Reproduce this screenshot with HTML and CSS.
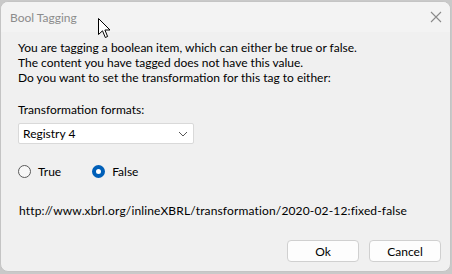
FILE: index.html
```html
<!DOCTYPE html>
<html lang="en">
<head>
    <meta charset="UTF-8"/>
    <title>Bool Tagging</title>
    <link rel="stylesheet" href="styles.css">
</head>
<body>
<div class="dialog">
    <div class="titlebar">
        <span class="title">Bool Tagging</span>
        <svg class="close" width="12" height="12" viewBox="0 0 12 12">
            <path d="M1 1L11 11M11 1L1 11" stroke="#8a8a8a" stroke-width="1.1"/>
        </svg>
    </div>
    <div class="content">
        <p class="message">
            You are tagging a boolean item, which can either be true or false.<br/>
            The content you have tagged does not have this value.<br/>
            Do you want to set the transformation for this tag to either:
        </p>
        <div class="field-label">Transformation formats:</div>
        <div class="select">
            <span>Registry 4</span>
            <svg width="10" height="6" viewBox="0 0 10 6">
                <path d="M1 1L5 5L9 1" fill="none" stroke="#555" stroke-width="1"/>
            </svg>
        </div>
        <div class="radios">
            <label class="radio"><span class="dot"></span>True</label>
            <label class="radio checked"><span class="dot"></span>False</label>
        </div>
        <p class="url">http://www.xbrl.org/inlineXBRL/transformation/2020-02-12:fixed-false</p>
        <div class="buttons">
            <button>Ok</button>
            <button>Cancel</button>
        </div>
    </div>
    <svg class="cursor" width="13" height="21" viewBox="0 0 13 21">
        <path d="M0.5 0.5V16.5L4.5 12.8L7.3 19.5L9.6 18.5L6.9 12H12L0.5 0.5Z" fill="#fff" stroke="#000" stroke-width="1"/>
    </svg>
</div>
</body>
</html>
```

FILE: styles.css
```css
body {
    margin: 0;
    background: #c9c9c9;
    font-family: Lato, "Liberation Sans", sans-serif;
    font-size: 12px;
    color: #000;
}

.dialog {
    position: relative;
    width: 451px;
    height: 271px;
    margin: 1px 0 0 0;
    background: #f0f0f0;
    border: 1px solid #c4c4c4;
    border-radius: 8px;
    box-sizing: border-box;
    overflow: hidden;
}

.titlebar {
    height: 30px;
    display: flex;
    align-items: center;
    justify-content: space-between;
    padding: 0 8px 0 9px;
    background: #f3f3f3;
}

.title {
    color: #8c8c8c;
    font-size: 12px;
}

.content {
    padding: 8px 8px 0 17px;
}

.message {
    margin: 0;
    line-height: 15px;
}

.field-label {
    margin-top: 17px;
    line-height: 15px;
}

.select {
    width: 176px;
    height: 21px;
    margin-top: 6px;
    box-sizing: border-box;
    display: flex;
    align-items: center;
    justify-content: space-between;
    padding: 0 5px 0 4px;
    background: #fff;
    border: 1px solid #d9d9d9;
    border-radius: 2px;
}

.radios {
    display: flex;
    gap: 31px;
    margin-top: 20px;
}

.radio {
    display: flex;
    align-items: center;
    gap: 7px;
}

.dot {
    width: 13px;
    height: 13px;
    box-sizing: border-box;
    border: 1px solid #5a5a5a;
    border-radius: 50%;
    background: #f7f7f7;
}

.radio.checked .dot {
    border: 4px solid #005fb8;
    background: #fff;
}

.url {
    margin: 24px 0 0 1px;
    letter-spacing: 0.15px;
}

.buttons {
    display: flex;
    justify-content: flex-end;
    gap: 10px;
    margin-top: 22px;
    padding-right: 1px;
}

.buttons button {
    width: 72px;
    height: 22px;
    font-family: inherit;
    font-size: 12px;
    background: #fdfdfd;
    border: 1px solid #d0d0d0;
    border-radius: 4px;
}

.cursor {
    position: absolute;
    left: 97px;
    top: 16px;
}
```
